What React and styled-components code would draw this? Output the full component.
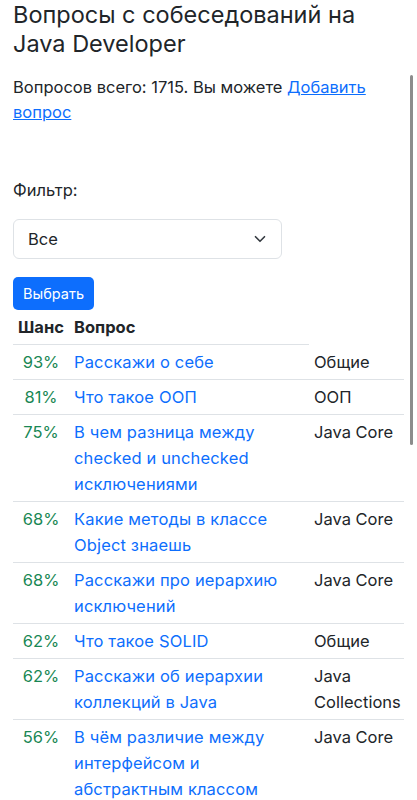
import React from "react";
import styled, { createGlobalStyle } from "styled-components";

const GlobalStyle = createGlobalStyle`
  body {
    margin: 0;
    background: #ffffff;
    color: #212529;
    font-family: Inter, "Liberation Sans", sans-serif;
  }
`;

const Page = styled.main`
  padding: 0 13px 40px;
`;

const Title = styled.h1`
  margin: 0;
  font-size: 23.5px;
  line-height: 29px;
  font-weight: 400;
`;

const Intro = styled.p`
  margin: 17px 0 0;
  font-size: 16.5px;
  line-height: 25px;
`;

const TextLink = styled.a`
  color: #0d6efd;
  text-decoration: underline;
`;

const FilterForm = styled.form`
  margin-top: 53px;
  display: flex;
  flex-direction: column;
  align-items: flex-start;
`;

const Label = styled.label`
  font-size: 16.5px;
  line-height: 25px;
`;

const SelectBox = styled.div`
  margin-top: 16px;
  width: 269px;
  height: 40px;
  box-sizing: border-box;
  border: 1px solid #dee2e6;
  border-radius: 6px;
  display: flex;
  align-items: center;
  justify-content: space-between;
  padding: 0 15px 0 14px;
  font-size: 16.5px;

  svg {
    width: 12px;
    height: 12px;
  }
`;

const Button = styled.button`
  margin-top: 18px;
  height: 33px;
  padding: 0 10px;
  border: none;
  border-radius: 5px;
  background: #0d6efd;
  color: #ffffff;
  font-family: inherit;
  font-size: 14.5px;
`;

const Table = styled.table`
  width: 391px;
  border-collapse: collapse;
  table-layout: fixed;
  font-size: 16.5px;
  line-height: 26px;
  letter-spacing: 0.15px;

  th {
    text-align: left;
    font-weight: 700;
    letter-spacing: 0;
    padding: 4px 5px;
    border-bottom: 1px solid #dee2e6;
  }

  td {
    vertical-align: top;
    padding: 4px 5px;
    border-bottom: 1px solid #dee2e6;
  }
`;

const Chance = styled.td`
  color: #198754;
  text-align: center;
  letter-spacing: 0;
`;

const QuestionLink = styled.a`
  color: #0d6efd;
  text-decoration: none;
`;

const Tag = styled.td`
  letter-spacing: 0;
`;

const ScrollThumb = styled.div`
  position: fixed;
  top: 75px;
  right: 4px;
  width: 3px;
  height: 370px;
  border-radius: 2px;
  background: #8c8c8c;
`;

const questions = [
  { chance: 93, text: "Расскажи о себе", tag: "Общие" },
  { chance: 81, text: "Что такое ООП", tag: "ООП" },
  { chance: 75, text: "В чем разница между checked и unchecked исключениями", tag: "Java Core" },
  { chance: 68, text: "Какие методы в классе Object знаешь", tag: "Java Core" },
  { chance: 68, text: "Расскажи про иерархию исключений", tag: "Java Core" },
  { chance: 62, text: "Что такое SOLID", tag: "Общие" },
  { chance: 62, text: "Расскажи об иерархии коллекций в Java", tag: "Java Collections" },
  { chance: 56, text: "В чём различие между интерфейсом и абстрактным классом", tag: "Java Core" },
];

export default function App() {
  return (
    <>
      <GlobalStyle />
      <Page>
        <Title>Вопросы с собеседований на Java Developer</Title>
        <Intro>
          Вопросов всего: 1715. Вы можете <TextLink href="#">Добавить вопрос</TextLink>
        </Intro>
        <FilterForm onSubmit={e => e.preventDefault()}>
          <Label>Фильтр:</Label>
          <SelectBox>
            <span>Все</span>
            <svg viewBox="0 0 16 16" fill="none" stroke="#343a40" strokeWidth="2.2" strokeLinecap="round" strokeLinejoin="round">
              <path d="M2 5l6 6 6-6" />
            </svg>
          </SelectBox>
          <Button type="submit">Выбрать</Button>
        </FilterForm>
        <Table>
          <colgroup>
            <col style={{ width: 56 }} />
            <col />
            <col style={{ width: 95 }} />
          </colgroup>
          <thead>
            <tr>
              <th>Шанс</th>
              <th>Вопрос</th>
            </tr>
          </thead>
          <tbody>
            {questions.map((q, i) => (
              <tr key={i}>
                <Chance>{q.chance}%</Chance>
                <td>
                  <QuestionLink href="#">{q.text}</QuestionLink>
                </td>
                <Tag>{q.tag}</Tag>
              </tr>
            ))}
          </tbody>
        </Table>
      </Page>
      <ScrollThumb />
    </>
  );
}
